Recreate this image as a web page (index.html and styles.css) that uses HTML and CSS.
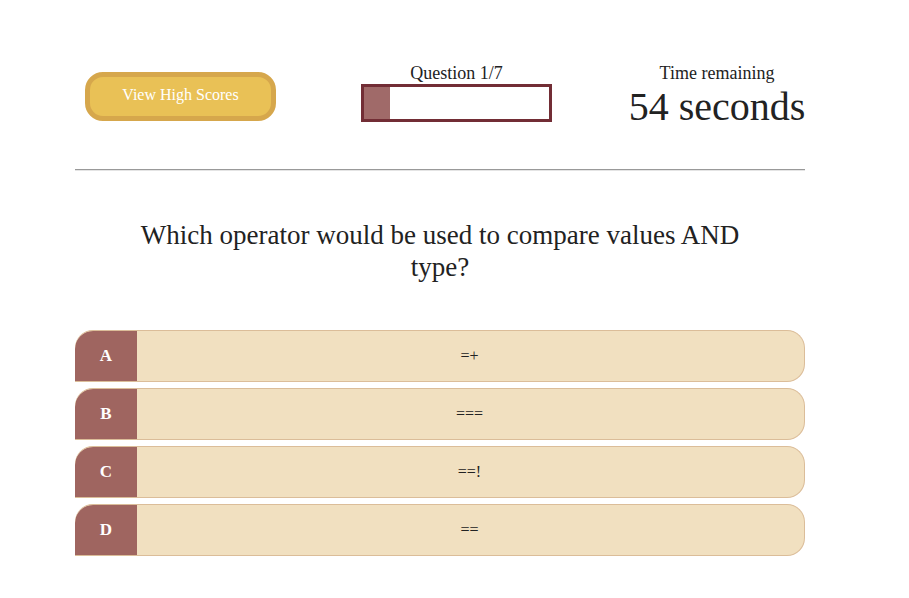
FILE: index.html
```html
<!DOCTYPE html>
<html>
<head>
<meta charset="utf-8">
<link rel="stylesheet" href="styles.css">
</head>
<body>
<main class="quiz">
  <header class="top">
    <button class="scores-btn">View High Scores</button>
    <div class="progress-block">
      <div class="label">Question 1/7</div>
      <div class="progress"><div class="progress-fill" style="width: 14.29%"></div></div>
    </div>
    <div class="timer">
      <div class="label">Time remaining</div>
      <div class="seconds">54 seconds</div>
    </div>
  </header>
  <hr class="divider">
  <h2 class="question">Which operator would be used to compare values AND type?</h2>
  <ul class="answers">
    <li class="answer"><span class="letter">A</span><span class="text">=+</span></li>
    <li class="answer"><span class="letter">B</span><span class="text">===</span></li>
    <li class="answer"><span class="letter">C</span><span class="text">==!</span></li>
    <li class="answer"><span class="letter">D</span><span class="text">==</span></li>
  </ul>
</main>
</body>
</html>
```
FILE: styles.css
```css
html, body {
  margin: 0;
  padding: 0;
  background: #ffffff;
}
body {
  font-family: "Liberation Serif", serif;
  color: #222222;
}
.quiz {
  width: 730px;
  margin-left: 75px;
  padding-top: 63px;
}
.top {
  display: flex;
  align-items: flex-start;
  height: 106px;
}
.scores-btn {
  margin-top: 9px;
  margin-left: 10px;
  width: 191px;
  height: 49px;
  box-sizing: border-box;
  border: 5px solid #d6a74c;
  border-radius: 18px;
  background: #e9c156;
  color: #ffffff;
  font-family: "Liberation Serif", serif;
  font-size: 16px;
  line-height: 18px;
  padding: 0 0 3px;
}
.progress-block {
  margin-left: 85px;
  width: 191px;
  display: flex;
  flex-direction: column;
  align-items: center;
}
.label {
  font-family: "Liberation Serif", serif;
  font-size: 18px;
  line-height: 21px;
  color: #222222;
}
.progress {
  width: 191px;
  height: 38px;
  box-sizing: border-box;
  border: 3px solid #722d35;
  background: #ffffff;
}
.progress-fill {
  height: 100%;
  background: #a06a69;
}
.timer {
  margin-left: auto;
  width: 176px;
  display: flex;
  flex-direction: column;
  align-items: center;
}
.seconds {
  font-family: "Liberation Serif", serif;
  font-size: 40px;
  line-height: 44px;
  margin-top: 1px;
  color: #222222;
  white-space: nowrap;
}
.divider {
  margin: 0;
  border: 0;
  border-top: 1px solid #999999;
  border-bottom: 1px solid #e4e4e4;
}
.question {
  font-family: "Liberation Serif", serif;
  width: 620px;
  margin: 48px auto 0;
  text-align: center;
  font-weight: normal;
  font-size: 27px;
  line-height: 32px;
  color: #222222;
}
.answers {
  list-style: none;
  margin: 47px 0 0;
  padding: 0;
  display: flex;
  flex-direction: column;
  gap: 6px;
}
.answer {
  display: flex;
  height: 52px;
  box-sizing: border-box;
  background: #f1e0c0;
  border: 1px solid #dbbd99;
  border-left: 0;
  border-radius: 18px 18px 18px 0;
  overflow: hidden;
}
.letter {
  width: 62px;
  flex: none;
  display: flex;
  align-items: center;
  justify-content: center;
  background: #9f6560;
  color: #ffffff;
  font-family: "Liberation Serif", serif;
  font-size: 17px;
  font-weight: bold;
  border-radius: 18px 0 0 0;
}
.text {
  flex: 1;
  display: flex;
  align-items: center;
  justify-content: center;
  font-family: "Liberation Serif", serif;
  font-size: 16px;
  color: #222222;
  padding-right: 2px;
}
```
